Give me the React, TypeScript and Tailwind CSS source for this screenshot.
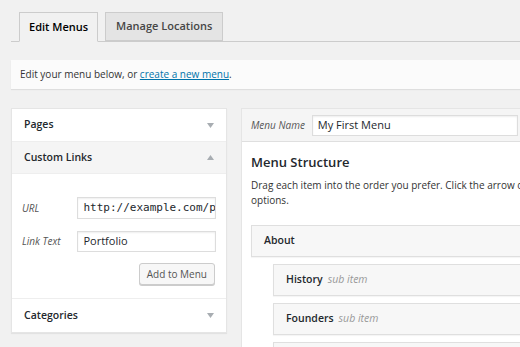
const Arrow = ({ up = false }: { up?: boolean }) => (
  <svg width="7" height="5" viewBox="0 0 7 5" className="text-[#a8adb2]">
    {up ? <path d="M0 5 L3.5 0 L7 5 Z" fill="currentColor" /> : <path d="M0 0 L7 0 L3.5 5 Z" fill="currentColor" />}
  </svg>
);

const MenuItem = ({ title, sub, indent = false }: { title: string; sub?: boolean; indent?: boolean }) => (
  <div
    className={`h-[32px] flex items-center border border-[#dfdfdf] border-r-0 bg-[#f7f7f7] shadow-[0_1px_1px_rgba(0,0,0,0.04)] ${
      indent ? "ml-[31px] pl-[12px]" : "ml-[9px] pl-[12px]"
    }`}
  >
    <span className="text-[10.5px] font-semibold text-[#23282d]">{title}</span>
    {sub && <span className="ml-[5px] text-[10.5px] italic text-[#999]">sub item</span>}
  </div>
);

export default function App() {
  return (
    <div className="w-[520px] h-[347px] overflow-hidden bg-[#f1f1f1] font-['Open_Sans',sans-serif] text-[#23282d]">
      {/* tabs */}
      <div className="pt-[12px] ml-[11px] border-b border-[#ccc] flex gap-[7px] pl-[8px]">
        <div className="h-[30px] -mb-px px-[9px] flex items-center border border-[#ccc] border-b-[#f1f1f1] bg-[#f1f1f1] text-[11px] font-semibold text-[#000]">
          Edit Menus
        </div>
        <div className="h-[29px] px-[10px] flex items-center border border-[#ccc] bg-[#e4e4e4] text-[11px] font-semibold text-[#464646]">
          Manage Locations
        </div>
      </div>

      {/* notice */}
      <div className="mt-[18px] ml-[11px] h-[29px] bg-[#fbfbfb] shadow-[0_1px_1px_rgba(0,0,0,0.08)] flex items-center pl-[9px] text-[10px] text-[#333]">
        Edit your menu below, or&nbsp;
        <span className="text-[#0073aa] underline">create a new menu</span>.
      </div>

      <div className="mt-[19px] ml-[11px] flex gap-[14px]">
        {/* left column */}
        <div className="w-[216px] shrink-0 bg-white border border-[#e5e5e5] shadow-[0_1px_1px_rgba(0,0,0,0.06)] self-start">
          <div className="h-[33px] flex items-center justify-between px-[12px] border-b border-[#eee]">
            <span className="text-[10.5px] font-semibold">Pages</span>
            <Arrow />
          </div>
          <div className="h-[32px] flex items-center justify-between px-[12px] bg-[#f5f5f5] border-b border-[#eee]">
            <span className="text-[10.5px] font-semibold">Custom Links</span>
            <Arrow up />
          </div>
          <div className="px-[10px] pt-[23px] pb-[13px] border-b border-[#eee]">
            <div className="flex items-center h-[22px]">
              <span className="w-[56px] text-[10px] italic text-[#555]">URL</span>
              <div className="w-[140px] h-[22px] border border-[#ddd] shadow-[inset_0_1px_2px_rgba(0,0,0,0.07)] flex items-center pl-[5px] font-['DejaVu_Sans_Mono',monospace] text-[11px] overflow-hidden whitespace-nowrap">
                http://example.com/p
              </div>
            </div>
            <div className="flex items-center h-[21px] mt-[12px]">
              <span className="w-[56px] text-[10px] italic text-[#555]">Link Text</span>
              <div className="w-[140px] h-[21px] border border-[#ddd] shadow-[inset_0_1px_2px_rgba(0,0,0,0.07)] flex items-center pl-[5px] text-[11px]">
                Portfolio
              </div>
            </div>
            <div className="flex justify-end mt-[11px] pr-[1px]">
              <div className="h-[22px] px-[7px] flex items-center border border-[#ccc] rounded-[3px] bg-[#f7f7f7] shadow-[0_1px_0_#ccc] text-[10px] text-[#555]">
                Add to Menu
              </div>
            </div>
          </div>
          <div className="h-[33px] flex items-center justify-between px-[12px]">
            <span className="text-[10.5px] font-semibold">Categories</span>
            <Arrow />
          </div>
        </div>

        {/* right column */}
        <div className="flex-1 min-w-0 bg-white border border-[#e5e5e5] border-r-0 h-[260px]">
          <div className="h-[33px] flex items-center bg-[#f5f5f5] border-b border-[#dfdfdf] pl-[9px]">
            <span className="text-[10px] italic text-[#555] mr-[7px]">Menu Name</span>
            <div className="flex-1 h-[21px] mr-[2px] bg-white border border-[#ddd] shadow-[inset_0_1px_2px_rgba(0,0,0,0.07)] flex items-center pl-[5px] text-[11px]">
              My First Menu
            </div>
          </div>
          <div className="pl-[9px] pt-[10px]">
            <h3 className="text-[13px] font-semibold leading-[20px]">Menu Structure</h3>
            <p className="mt-[6px] text-[10px] leading-[15px] text-[#333] whitespace-nowrap">
              Drag each item into the order you prefer. Click the arrow on the right of the item to reveal additional configuration
              <br />
              options.
            </p>
          </div>
          <div className="mt-[17px] flex flex-col gap-[7px]">
            <MenuItem title="About" />
            <MenuItem title="History" sub indent />
            <MenuItem title="Founders" sub indent />
            <MenuItem title="Team" sub indent />
          </div>
        </div>
      </div>
    </div>
  );
}
